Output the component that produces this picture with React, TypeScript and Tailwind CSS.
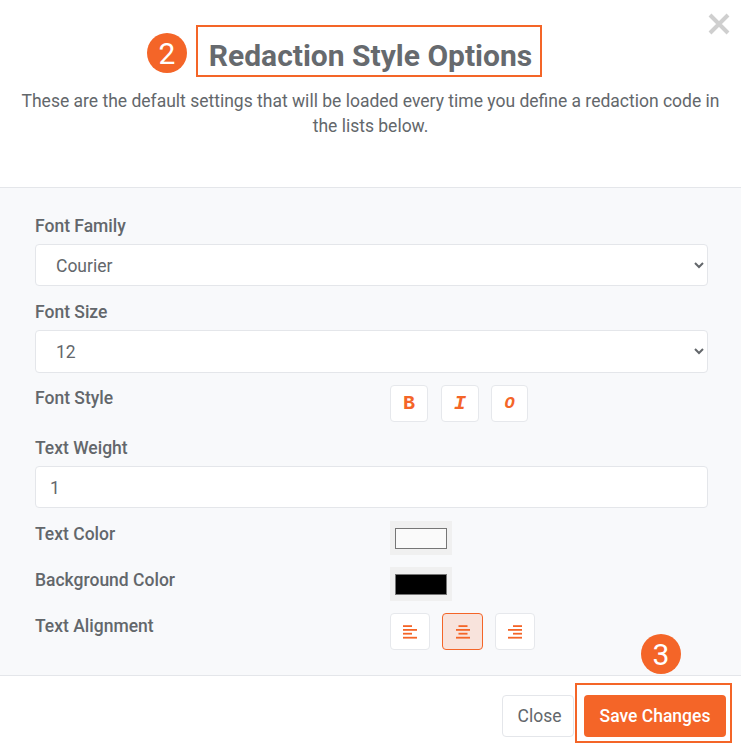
import React from 'react';

const AlignIcon: React.FC<{ align: 'left' | 'center' | 'right' }> = ({ align }) => {
  // two short bars and two long bars, the short ones shift with the alignment
  const shortX = align === 'left' ? 0 : align === 'center' ? 2.5 : 5;
  return (
    <svg width="14" height="14" viewBox="0 0 14 14" className="text-[#f46528]" fill="currentColor">
      <rect x={shortX} y="0.2" width="9" height="1.8" />
      <rect x="0" y="4" width="14" height="1.8" />
      <rect x={shortX} y="7.8" width="9" height="1.8" />
      <rect x="0" y="11.8" width="14" height="1.8" />
    </svg>
  );
};

const Label: React.FC<{ children: React.ReactNode; className?: string }> = ({ children, className }) => (
  <label className={`block pt-px text-[17.5px] leading-6 font-medium text-[#63676b] ${className ?? ''}`}>{children}</label>
);

const Badge: React.FC<{ n: number; className: string }> = ({ n, className }) => (
  <div className={`absolute w-10 h-10 rounded-full bg-[#f46528] text-white flex items-center justify-center text-[30px] font-normal ${className}`}>
    {n}
  </div>
);

const fieldCls = 'block w-full bg-white border border-[#e4e6ea] rounded pr-2 text-[17.5px] text-[#63676b] outline-none';
const styleBtn = 'h-[37px] flex items-center justify-center bg-white border border-[#e6e8ec] rounded text-[#f46528] font-bold font-["Liberation_Mono",monospace]';
const alignBtn = 'h-[37px] flex items-center justify-center border rounded';

const App: React.FC = () => {
  return (
    <div className='relative w-[741px] h-[750px] overflow-hidden bg-white font-["Roboto",sans-serif] text-[#63676b]'>
      {/* HEADER */}
      <div className="h-[188px] border-b border-[#e4e6ea] pt-[36px] px-[15px] text-center">
        <h2 className="text-[30px] leading-10 font-bold text-[#666a6e]">Redaction Style Options</h2>
        <p className="mt-[13px] text-[17.5px] leading-[25px] text-[#63676b]">
          These are the default settings that will be loaded every time you define a redaction code in the lists below.
        </p>
      </div>
      <button className="absolute top-[12px] right-[10px] text-[#cfcfcf]">
        <svg width="24" height="24" viewBox="0 0 24 24" fill="none" stroke="currentColor" strokeWidth="4">
          <path d="M3 3 L21 21 M21 3 L3 21" />
        </svg>
      </button>

      {/* BODY */}
      <div className="h-[487px] bg-[#f8f9fb] pt-[25px] pl-[35px] pr-[33px]">
        <Label className="mb-[6px]">Font Family</Label>
        <select defaultValue="Courier" className={`${fieldCls} h-[42px] pl-4 pt-px`}>
          <option>Courier</option>
          <option>Arial</option>
        </select>

        <Label className="mt-[13px] mb-[6px]">Font Size</Label>
        <select defaultValue="12" className={`${fieldCls} h-[43px] pl-4`}>
          <option>12</option>
          <option>14</option>
        </select>

        <div className="flex mt-[12px]">
          <Label className="w-[355px]">Font Style</Label>
          <div className="flex">
            <button className={`${styleBtn} w-[38px] text-[20px]`}>B</button>
            <button className={`${styleBtn} w-[38px] ml-[13px] text-[20px] italic`}>I</button>
            <button className={`${styleBtn} w-[37px] ml-[12px] text-[17px] italic`}>O</button>
          </div>
        </div>

        <Label className="mt-[13px] mb-[6px]">Text Weight</Label>
        <input readOnly value="1" className={`${fieldCls} h-[42px] pl-[14px] pt-px`} />

        <div className="flex mt-[13px]">
          <Label className="w-[355px]">Text Color</Label>
          <div className="w-[62px] h-[34px] bg-[#f0f0f0] flex items-center justify-center">
            <div className="w-[52px] h-[21px] bg-[#fafafa] border border-[#767676]" />
          </div>
        </div>

        <div className="flex mt-[12px]">
          <Label className="w-[355px]">Background Color</Label>
          <div className="w-[62px] h-[34px] bg-[#f0f0f0] flex items-center justify-center">
            <div className="w-[52px] h-[21px] bg-black border border-[#767676]" />
          </div>
        </div>

        <div className="flex mt-[12px]">
          <Label className="w-[355px]">Text Alignment</Label>
          <div className="flex gap-[12px]">
            <button className={`${alignBtn} w-[40px] bg-white border-[#e6e8ec]`}><AlignIcon align="left" /></button>
            <button className={`${alignBtn} w-[41px] bg-[#f8e3dc] border-[#f46528]`}><AlignIcon align="center" /></button>
            <button className={`${alignBtn} w-[40px] bg-white border-[#e6e8ec]`}><AlignIcon align="right" /></button>
          </div>
        </div>
      </div>

      {/* FOOTER */}
      <div className="border-t border-[#e4e6ea] pt-[19px] pr-[15px] flex justify-end gap-[10px]">
        <button className="w-[72px] h-[42px] pl-[3px] pt-px bg-white border border-[#e4e6ea] rounded text-[17.5px] text-[#63676b]">Close</button>
        <button className="w-[142px] h-[42px] pt-px bg-[#f46528] rounded text-[17.5px] font-medium text-white">Save Changes</button>
      </div>

      {/* annotations over the screenshot */}
      <Badge n={2} className="left-[147px] top-[33px]" />
      <div className="absolute left-[196px] top-[25px] w-[346px] h-[52px] border-2 border-[#f46528]" />
      <Badge n={3} className="left-[641px] top-[634px]" />
      <div className="absolute left-[575px] top-[683px] w-[157px] h-[60px] border-2 border-[#f46528]" />
    </div>
  );
};

export default App;
